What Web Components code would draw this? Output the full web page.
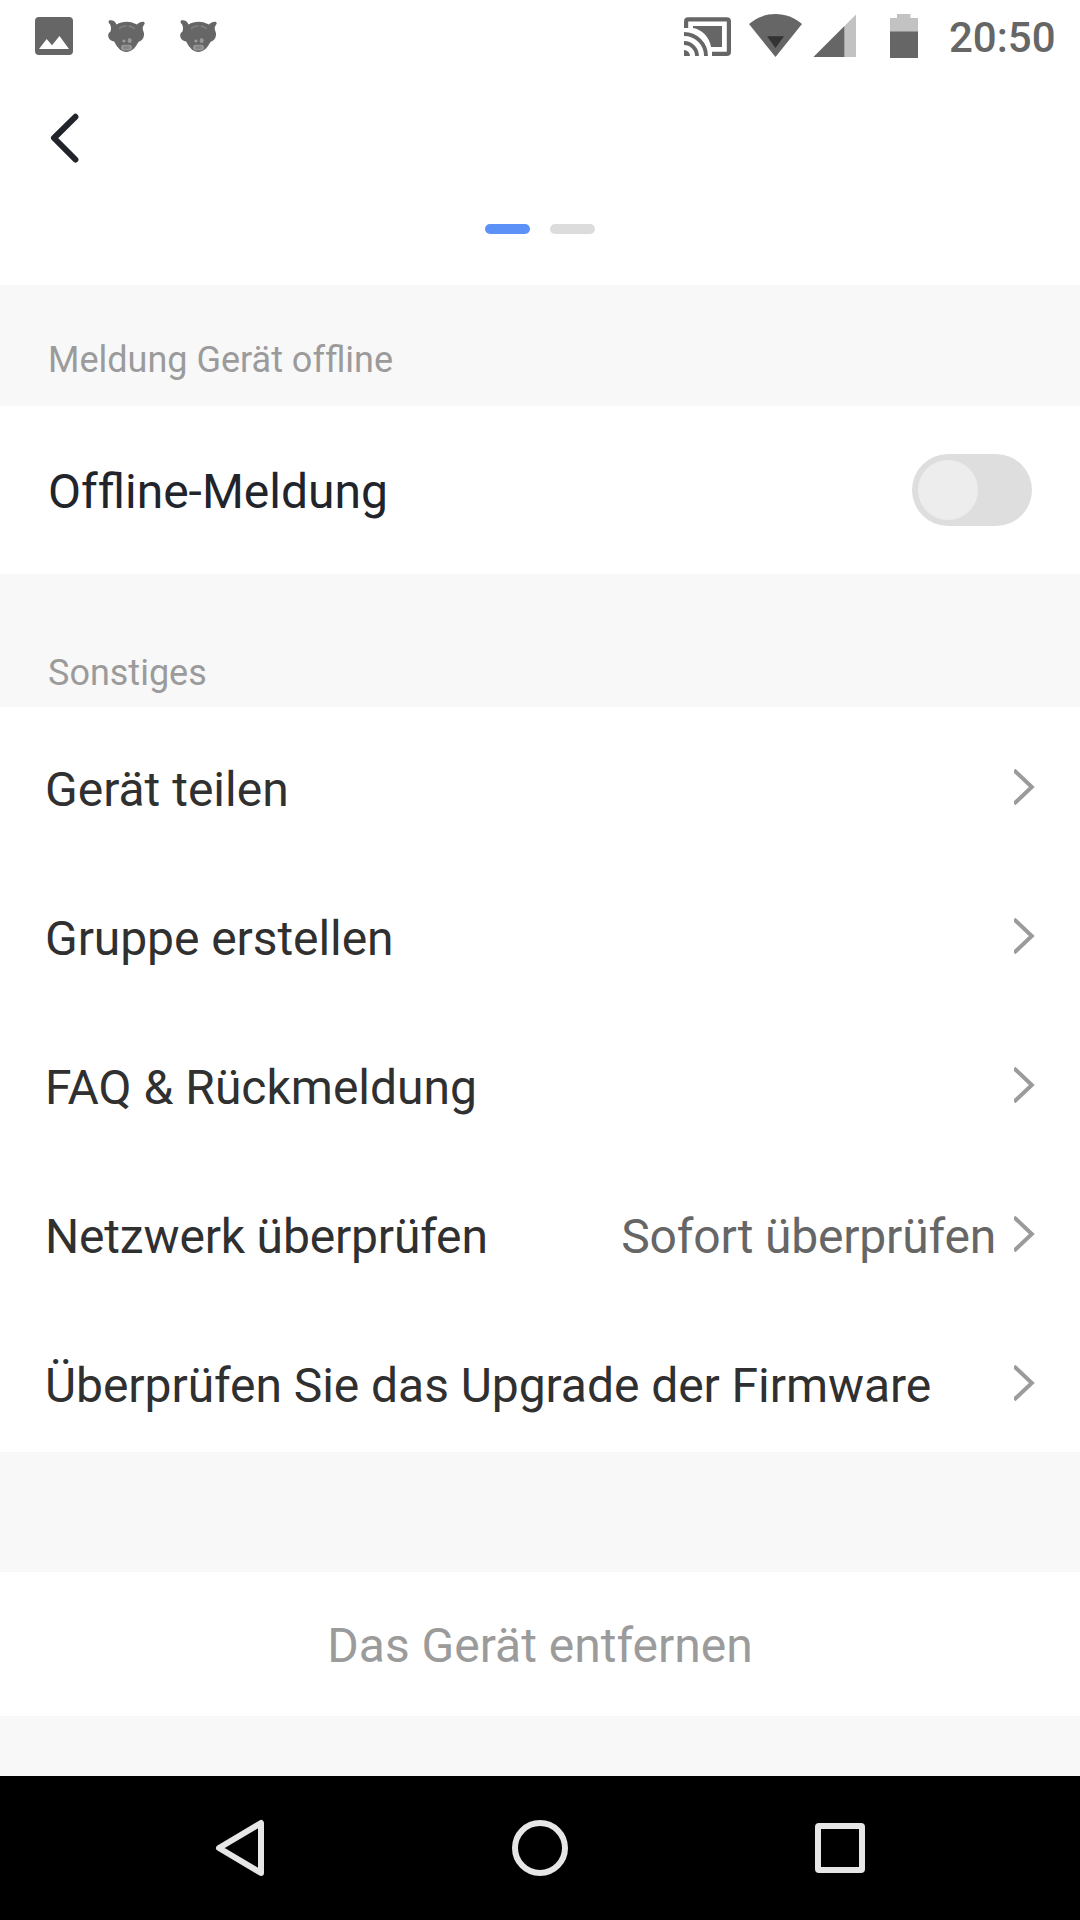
<!DOCTYPE html>
<html lang="de">
<head>
<meta charset="UTF-8">
<meta name="viewport" content="width=device-width, initial-scale=1.0">
<title>Geräteeinstellungen</title>
<style>
  body {
    margin: 0;
    background: #f8f8f8;
    font-family: Roboto, "Liberation Sans", sans-serif;
  }
  /* keeps the first f out of the ffl ligature */
  .solo {
    font-variant-ligatures: none;
  }
</style>
</head>
<body>
<settings-screen>
  <status-bar slot="top" time="20:50"></status-bar>
  <page-header slot="top"></page-header>

  <section-title style="--height: 121px; --drop: 29px"><span>Meldung Gerät o<span class="solo">f</span>fline</span></section-title>
  <switch-row>O<span class="solo">f</span>fline-Meldung</switch-row>

  <section-title style="--height: 133px; --drop: 64px">Sonstiges</section-title>
  <link-row>Gerät teilen</link-row>
  <link-row style="--tracking: -.07px">Gruppe erstellen</link-row>
  <link-row>FAQ &amp; Rückmeldung</link-row>
  <link-row style="--tracking: -.18px">Netzwerk überprüfen<span slot="value">Sofort überprüfen</span></link-row>
  <link-row style="--tracking: -.06px">Überprüfen Sie das Upgrade der Firmware</link-row>

  <remove-button>Das Gerät entfernen</remove-button>

  <nav-bar slot="bottom"></nav-bar>
</settings-screen>

<script>
// small helper, every element clones its own template
function makeTemplate(html) {
  var template = document.createElement("template");
  template.innerHTML = html;
  return template;
}

class BaseElement extends HTMLElement {
  constructor() {
    super();
    this.attachShadow({mode: "open"});
    this.shadowRoot.appendChild(this.constructor.template.content.cloneNode(true));
  }
}

// SCREEN
class SettingsScreen extends BaseElement {
  static template = makeTemplate(`
    <style>
      :host {
        display: flex;
        flex-direction: column;
        width: 1080px;
        height: 1920px;
        overflow: hidden;
      }
      main {
        flex: 1;
      }
    </style>
    <slot name="top"></slot>
    <main><slot></slot></main>
    <slot name="bottom"></slot>
  `);
}

// STATUS BAR
class CatIcon extends BaseElement {
  static template = makeTemplate(`
    <style>
      :host { display: block; width: 38px; height: 72px; }
      svg { display: block; }
    </style>
    <svg width="38" height="72" viewBox="0 0 38 72">
      <path fill="#666" d="M.6 22C.3 20.500 1.700 20 3 20.300 5.400 20.300 7.500 21.800 8.500 24.600 11.500 22.600 15 21.700 18.700 21.700 22.500 21.700 26 22.700 28.900 24.600 30.500 22.700 33 21.500 35.400 21.700 36.800 21.800 37 23.400 36.200 24.600 34.300 26.800 34.500 29.500 35.500 31.600 36.900 35.500 35.500 39.500 32 41.200 30.600 41.500 30.100 42.600 29.400 43.700 26.700 48.400 23.300 51.900 18.400 51.900 13.300 51.900 10.400 48.700 7.800 44.600 7 43.300 6.700 41.500 5.500 41.300 1.500 40.700-.6 36.800.5 33.800.8 32.800 1.900 32.300 2.500 31.300 3.400 28.900 3.200 26.200 1.600 23.800.9 23.200.7 22.800.6 22Z"/>
      <path fill="none" stroke="#858585" stroke-width="1.200" stroke-linecap="round" d="M11.500 28.300Q14.500 26 18 25.900M21 26.100Q24 26.400 26.200 28.500"/>
      <circle cx="16" cy="41" r="1.600" fill="#999"/>
      <ellipse cx="21.700" cy="40.400" rx="2" ry="2.500" fill="#999"/>
      <rect x="13" y="44.800" width="11" height="5.600" rx="2.800" fill="#979797"/>
      <rect x="15.300" y="46.200" width="6.500" height="2.600" rx="1.300" fill="#858585"/>
    </svg>
  `);
}
customElements.define("cat-icon", CatIcon);

class StatusBar extends BaseElement {
  static template = makeTemplate(`
    <style>
      :host {
        display: flex;
        align-items: flex-start;
        box-sizing: border-box;
        height: 72px;
        padding: 0 25px 0 35px;
        background: #fff;
        color: #666;
      }
      svg { display: block; flex: none; }
      cat-icon { margin-left: 34px; }
      .picture { margin-right: 1px; }
      .cast { margin-left: auto; }
      .wifi { margin-left: 18px; }
      .signal { margin-left: 11px; }
      .battery { margin-left: 34px; }
      .time {
        width: 106px;
        margin-left: 31px;
        font-size: 42px;
        font-weight: 500;
        line-height: 76px;
        white-space: nowrap;
      }
    </style>
    <svg class="picture" width="38" height="72" viewBox="0 0 38 72">
      <rect y="17" width="38" height="38" rx="4" fill="#666"/>
      <path fill="#fff" d="M4 49 11.700 39 17 45.300 24.500 36 34 49Z"/>
    </svg>
    <cat-icon></cat-icon>
    <cat-icon></cat-icon>

    <svg class="cast" width="47" height="72" viewBox="0 0 47 72">
      <path fill="none" stroke="#666" stroke-width="4.200" d="M2.100 28V21.500Q2.100 19.300 4.300 19.300H42.700Q44.900 19.300 44.900 21.500V51.700Q44.900 53.900 42.700 53.900H28"/>
      <path fill="#666" d="M9 26H38V47H27C25.500 37 18 29.500 9 28Z"/>
      <path fill="#666" d="M0 50A6 6 0 0 1 6 56H0Z"/>
      <path fill="none" stroke="#666" stroke-width="3.900" d="M0 43A13 13 0 0 1 13 56M0 34A22 22 0 0 1 22 56"/>
    </svg>
    <svg class="wifi" width="53" height="72" viewBox="0 0 53 72">
      <path fill="#666" d="M0 24C7.500 17.500 16.500 14 26.500 14S45.500 17.500 53 24L26.500 57Z"/>
      <path fill="#333" d="M18 36.300H35L26.500 48Z"/>
    </svg>
    <svg class="signal" width="43" height="72" viewBox="0 0 43 72">
      <path fill="#c2c2c2" d="M.5 57 43 14.500V57Z"/>
      <path fill="#666" d="M.5 57 31.300 26.200V57Z"/>
    </svg>
    <svg class="battery" width="28" height="72" viewBox="0 0 28 72">
      <path fill="#c2c2c2" d="M0 18H7V14H20.500V18H28V32H0Z"/>
      <path fill="#666" d="M0 31.500H28V58H0Z"/>
    </svg>
    <div class="time"></div>
  `);

  connectedCallback() {
    this.shadowRoot.querySelector(".time").textContent = this.getAttribute("time");
  }
}

// HEADER - back arrow and the two page dots
class PageHeader extends BaseElement {
  static template = makeTemplate(`
    <style>
      :host {
        display: flex;
        flex-direction: column;
        height: 213px;
        background: #fff;
      }
      svg { display: block; }
      .back {
        height: 132px;
        padding: 0 48px;
      }
      .dots {
        display: flex;
        justify-content: center;
        gap: 20px;
        padding-top: 20px;
      }
      .dots span {
        width: 45px;
        height: 10px;
        border-radius: 5px;
        background: #dcdcdc;
      }
      .dots .active { background: #5c92f7; }
    </style>
    <div class="back">
      <svg width="36" height="132" viewBox="0 0 36 132">
        <path fill="none" stroke="#22242c" stroke-width="6" stroke-linecap="round" stroke-linejoin="round" d="M27.400 44.800 6 66 27.400 87.500"/>
      </svg>
    </div>
    <div class="dots"><span class="active"></span><span></span></div>
  `);
}

// SECTION TITLE
class SectionTitle extends BaseElement {
  static template = makeTemplate(`
    <style>
      :host {
        display: flex;
        align-items: center;
        box-sizing: border-box;
        height: var(--height);
        padding: var(--drop) 48px 0;
        font-size: 36px;
        line-height: 42px;
        color: #9b9b9b;
      }
    </style>
    <slot></slot>
  `);
}

// ROW WITH A SWITCH
class ToggleSwitch extends BaseElement {
  static template = makeTemplate(`
    <style>
      :host {
        display: flex;
        align-items: center;
        box-sizing: border-box;
        width: 120px;
        height: 72px;
        padding: 0 6px;
        border-radius: 36px;
        background: #dedede;
      }
      span {
        width: 60px;
        height: 60px;
        border-radius: 50%;
        background: #ededed;
      }
    </style>
    <span></span>
  `);
}
customElements.define("toggle-switch", ToggleSwitch);

class SwitchRow extends BaseElement {
  static template = makeTemplate(`
    <style>
      :host {
        display: flex;
        align-items: center;
        justify-content: space-between;
        height: 168px;
        padding: 0 48px;
        background: #fff;
        font-size: 48px;
        color: #22242c;
      }
      .label { padding-top: 3px; }
    </style>
    <div class="label"><slot></slot></div>
    <toggle-switch></toggle-switch>
  `);
}

// ROW WITH A CHEVRON
class LinkRow extends BaseElement {
  static template = makeTemplate(`
    <style>
      :host {
        display: flex;
        align-items: center;
        box-sizing: border-box;
        height: 149px;
        padding: 16px 45px 0;
        background: #fff;
        font-size: 48px;
        line-height: 56px;
        letter-spacing: var(--tracking, normal);
        color: #303030;
      }
      .label { flex: 1; }
      .value { color: #666; }
      svg {
        display: block;
        margin: 0 0 5px 18px;
      }
    </style>
    <div class="label"><slot></slot></div>
    <div class="value"><slot name="value"></slot></div>
    <svg width="21" height="36" viewBox="0 0 21 36">
      <path fill="none" stroke="#9b9b9b" stroke-width="4" d="M0 1.200 17.800 18 0 34.800"/>
    </svg>
  `);
}

// REMOVE BUTTON
class RemoveButton extends BaseElement {
  static template = makeTemplate(`
    <style>
      :host {
        display: flex;
        align-items: center;
        justify-content: center;
        box-sizing: border-box;
        height: 144px;
        margin-top: 120px;
        padding-top: 3px;
        background: #fff;
        font-size: 48px;
        line-height: 56px;
        color: #9b9b9b;
      }
    </style>
    <slot></slot>
  `);
}

// ANDROID NAVIGATION
class NavBar extends BaseElement {
  static template = makeTemplate(`
    <style>
      :host {
        display: flex;
        align-items: center;
        justify-content: space-between;
        box-sizing: border-box;
        height: 144px;
        padding: 0 210px;
        background: #000;
      }
      svg {
        display: block;
        fill: none;
        stroke: #e6e6e6;
        stroke-width: 6;
        stroke-linejoin: round;
      }
    </style>
    <svg width="60" height="60" viewBox="0 0 60 60">
      <path d="M51 5V55L9 30Z"/>
    </svg>
    <svg width="60" height="60" viewBox="0 0 60 60">
      <circle cx="30" cy="30" r="25"/>
    </svg>
    <svg width="60" height="60" viewBox="0 0 60 60">
      <rect x="8" y="8" width="44" height="44" rx="1"/>
    </svg>
  `);
}

customElements.define("settings-screen", SettingsScreen);
customElements.define("status-bar", StatusBar);
customElements.define("page-header", PageHeader);
customElements.define("section-title", SectionTitle);
customElements.define("switch-row", SwitchRow);
customElements.define("link-row", LinkRow);
customElements.define("remove-button", RemoveButton);
customElements.define("nav-bar", NavBar);
</script>
</body>
</html>
